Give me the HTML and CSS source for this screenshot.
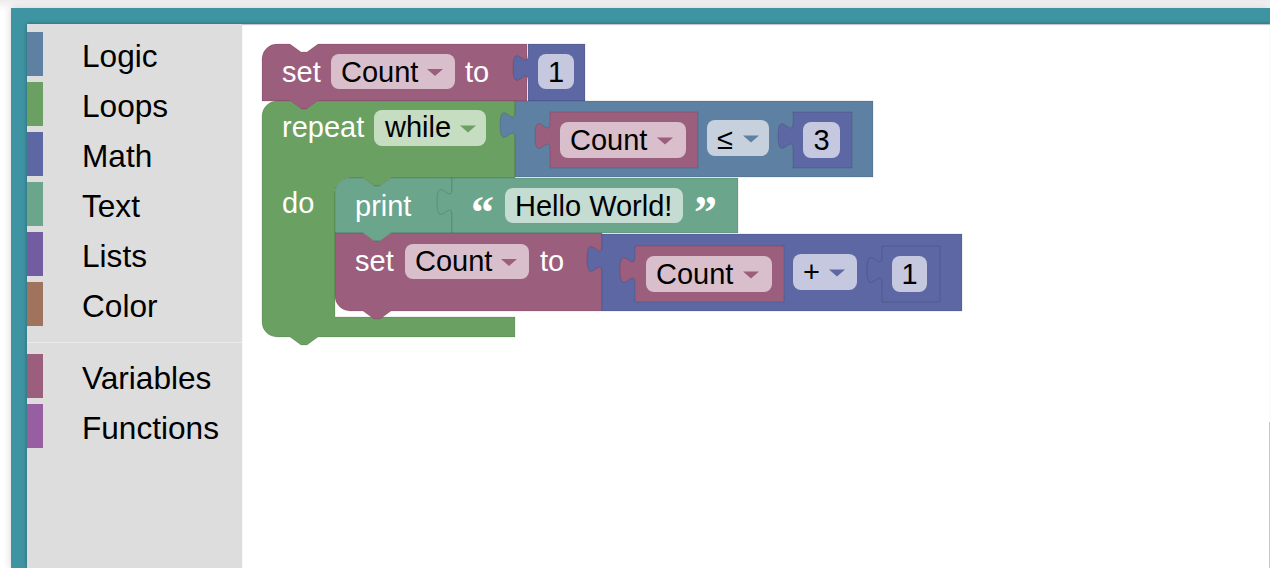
FILE: index.html
```html
<!DOCTYPE html>
<html lang="en">
<head>
    <meta charset="UTF-8">
    <meta name="viewport" content="width=device-width, initial-scale=1.0">
    <title>Blockly Workspace</title>
    <link rel="stylesheet" href="styles.css">
</head>
<body>
    <div class="frame">
        <div class="app">
            <div class="toolbox">
                <div class="cat"><span class="bar logic"></span><span class="label">Logic</span></div>
                <div class="cat"><span class="bar loops"></span><span class="label">Loops</span></div>
                <div class="cat"><span class="bar math"></span><span class="label">Math</span></div>
                <div class="cat"><span class="bar text"></span><span class="label">Text</span></div>
                <div class="cat"><span class="bar lists"></span><span class="label">Lists</span></div>
                <div class="cat"><span class="bar colour"></span><span class="label">Color</span></div>
                <div class="sep"></div>
                <div class="cat"><span class="bar vars"></span><span class="label">Variables</span></div>
                <div class="cat"><span class="bar procs"></span><span class="label">Functions</span></div>
            </div>
            <div class="workspace">
                <svg class="blocks" width="1028" height="544" viewBox="242 24 1028 544">
                    <!-- set Count to 1 -->
                    <path class="blk b-var" d="M262,59 A15,15 0 0 1 277,44 H290 l11,8 h6 l11,-8 H527 V101 H318 l-11,8 h-6 l-11,-8 H262 Z"/>
                    <text class="lbl" x="282" y="82">set</text>
                    <rect class="pill p-var" x="331" y="54" width="124" height="35" rx="8"/>
                    <text class="fld" x="341" y="82">Count</text>
                    <polygon class="b-var" points="427,69 443,69 435,76"/>
                    <text class="lbl" x="465" y="82">to</text>

                    <path class="blk b-math" d="M528,44 H585 V101 H528 V82 c0,-18.7 -15,15 -15,-14 s15,4.7 15,-14 Z"/>
                    <rect class="pill p-math" x="538" y="54" width="36" height="35" rx="8"/>
                    <text class="fld mid" x="556" y="82">1</text>

                    <!-- repeat while -->
                    <path class="blk b-loop" d="M262,116 A15,15 0 0 1 277,101 H290 l11,8 h6 l11,-8 H515 V178 H391 l-11,8 h-6 l-11,-8 H350 A15,15 0 0 0 335,193 V317 H515 V337 H318 l-11,8 h-6 l-11,-8 H277 A15,15 0 0 1 262,322 Z"/>
                    <text class="lbl" x="282" y="137">repeat</text>
                    <rect class="pill p-loop" x="374" y="110" width="112" height="36" rx="8"/>
                    <text class="fld" x="385" y="137">while</text>
                    <polygon class="b-loop" points="460,125.5 476,125.5 468,132.5"/>
                    <text class="lbl" x="282" y="213">do</text>

                    <!-- Count <= 3 -->
                    <path class="blk b-logic" d="M515,101 H873 V177 H515 V139 c0,-18.7 -15,15 -15,-14 s15,4.7 15,-14 Z"/>
                    <path class="blk b-var" d="M550,112 H698 V168 H550 V150 c0,-18.7 -15,15 -15,-14 s15,4.7 15,-14 Z"/>
                    <rect class="pill p-var" x="560" y="122" width="126" height="36" rx="8"/>
                    <text class="fld" x="570" y="150">Count</text>
                    <polygon class="b-var" points="657,137.5 673,137.5 665,144.5"/>
                    <rect class="pill p-logic" x="707" y="120" width="62" height="36" rx="8"/>
                    <text class="fld" x="717" y="149">≤</text>
                    <polygon class="b-logic" points="743,135.5 759,135.5 751,142.5"/>
                    <path class="blk b-math" d="M793,112 H852 V168 H793 V150 c0,-18.7 -15,15 -15,-14 s15,4.7 15,-14 Z"/>
                    <rect class="pill p-math" x="803" y="122" width="37" height="36" rx="8"/>
                    <text class="fld mid" x="821.5" y="150">3</text>

                    <!-- print "Hello World!" -->
                    <path class="blk b-text" d="M335,193 A15,15 0 0 1 350,178 H363 l11,8 h6 l11,-8 H452 V233 H391 l-11,8 h-6 l-11,-8 H335 Z"/>
                    <text class="lbl" x="355" y="216">print</text>
                    <path class="blk b-text" d="M452,178 H738 V233 H452 V216 c0,-18.7 -15,15 -15,-14 s15,4.7 15,-14 Z"/>
                    <text class="quote" x="471" y="228">“</text>
                    <rect class="pill p-text" x="505" y="188" width="178" height="35" rx="8"/>
                    <text class="fld" x="515" y="216">Hello World!</text>
                    <text class="quote" x="694" y="228">”</text>

                    <!-- set Count to Count + 1 -->
                    <path class="blk b-var" d="M335,233 H363 l11,8 h6 l11,-8 H602 V311 H391 l-11,8 h-6 l-11,-8 H350 A15,15 0 0 1 335,296 Z"/>
                    <text class="lbl" x="355" y="271">set</text>
                    <rect class="pill p-var" x="405" y="244" width="124" height="35" rx="8"/>
                    <text class="fld" x="415" y="271">Count</text>
                    <polygon class="b-var" points="501,259 517,259 509,266"/>
                    <text class="lbl" x="540" y="271">to</text>

                    <path class="blk b-math" d="M602,234 H962 V311 H602 V273 c0,-18.7 -15,15 -15,-14 s15,4.7 15,-14 Z"/>
                    <path class="blk b-var" d="M635,246 H784 V302 H635 V284 c0,-18.7 -15,15 -15,-14 s15,4.7 15,-14 Z"/>
                    <rect class="pill p-var" x="646" y="256" width="126" height="36" rx="8"/>
                    <text class="fld" x="656" y="284">Count</text>
                    <polygon class="b-var" points="743,271.5 759,271.5 751,278.5"/>
                    <rect class="pill p-math" x="793" y="254" width="64" height="36" rx="8"/>
                    <text class="fld" x="803" y="282">+</text>
                    <polygon class="b-math" points="829,269.5 845,269.5 837,276.5"/>
                    <path class="blk b-math" d="M882,246 H940 V302 H882 V284 c0,-18.7 -15,15 -15,-14 s15,4.7 15,-14 Z"/>
                    <rect class="pill p-math" x="892" y="256" width="35" height="36" rx="8"/>
                    <text class="fld mid" x="909.5" y="284">1</text>
                </svg>
                <div class="scroll-edge"></div>
            </div>
        </div>
    </div>
</body>
</html>
```

FILE: styles.css
```css
html, body {
    height: 100%;
    margin: 0;
    overflow: hidden;
}
body {
    background: linear-gradient(#ececec, #fafafa 8px, #fff 12px);
    font-family: "Liberation Sans", Arial, sans-serif;
}
.frame {
    margin: 8px 0 0 11px;
    padding: 16px 0 0 16px;
    height: calc(100vh - 8px);
    box-sizing: border-box;
    background: #3f94a3;
    box-shadow: 0 0 8px rgba(0, 0, 0, 0.18);
    display: flex;
}
.app {
    flex: 1;
    display: flex;
    box-shadow: 0 0 4px rgba(0, 0, 0, 0.35);
    position: relative;
}
.toolbox {
    width: 215px;
    background: #dddddd;
    padding-top: 8px;
    box-sizing: border-box;
}
.cat {
    display: flex;
    align-items: center;
    height: 44px;
    margin-bottom: 6px;
}
.bar {
    width: 16px;
    height: 44px;
}
.label {
    margin-left: 39px;
    padding-top: 5px;
    font-size: 31.6px;
    line-height: 1;
    color: #000;
}
.sep {
    height: 10px;
    border-bottom: 1px solid #ebebeb;
    margin-bottom: 11px;
}
.logic { background: #5e80a3; }
.loops { background: #6aa162; }
.math { background: #5c67a3; }
.text { background: #6aa58c; }
.lists { background: #725ca2; }
.colour { background: #a0735c; }
.vars { background: #9c5e7d; }
.procs { background: #975fa2; }

.workspace {
    flex: 1;
    background: #fff;
    position: relative;
    box-shadow: inset 0 1px 1px rgba(0, 0, 0, 0.25);
}
.blocks {
    display: block;
    font-family: "Liberation Sans", Arial, sans-serif;
    font-size: 29px;
}
.scroll-edge {
    position: absolute;
    right: 0;
    top: 398px;
    bottom: 0;
    width: 1px;
    background: #c8c8c8;
}

.blk {
    stroke: rgba(0, 0, 0, 0.12);
    stroke-width: 1;
}
.b-var { fill: #9c5e7d; }
.b-math { fill: #5c67a3; }
.b-logic { fill: #5e80a3; }
.b-loop { fill: #6aa162; }
.b-text { fill: #6aa58c; }
.p-var { fill: #d8bfcb; }
.p-math { fill: #c5c8de; }
.p-logic { fill: #c6d1dd; }
.p-loop { fill: #c6ddc1; }
.p-text { fill: #c4dcd2; }

.lbl { fill: #fff; }
.fld { fill: #000; }
.mid { text-anchor: middle; }
.quote {
    fill: #fff;
    font-family: "Liberation Serif", serif;
    font-weight: bold;
    font-size: 46px;
}
```
